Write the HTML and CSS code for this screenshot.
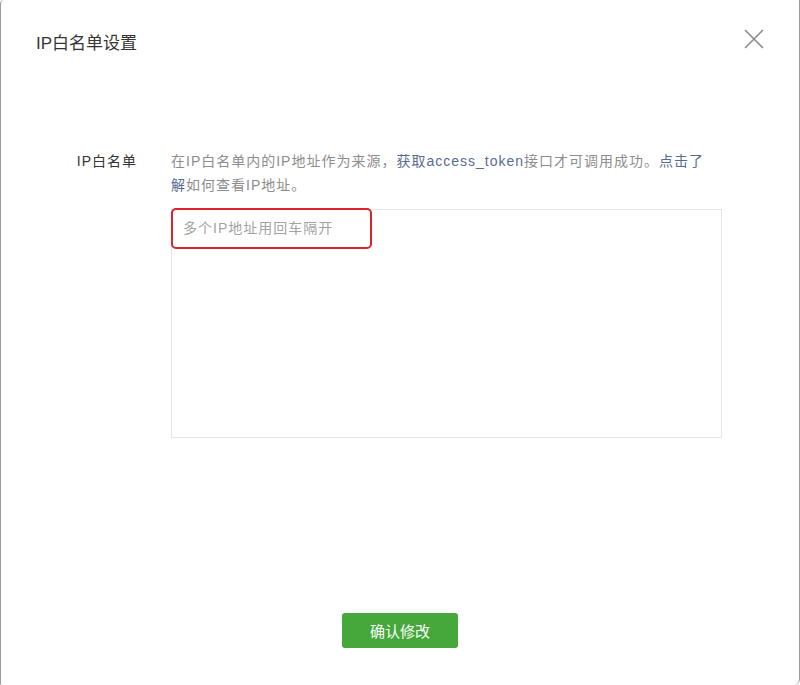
FILE: index.html
```html
<!DOCTYPE html>
<html lang="zh-CN">
<head>
<meta charset="utf-8">
<title>IP白名单设置</title>
<link rel="stylesheet" href="styles.css">
</head>
<body>
<div class="dialog">
  <div class="dialog-header">
    <h3 class="dialog-title">IP白名单设置</h3>
    <button class="close-btn" aria-label="关闭">
      <svg width="20" height="20" viewBox="0 0 20 20"><path d="M1 1L19 19M19 1L1 19" stroke="#8a8a8a" stroke-width="1.6" fill="none"/></svg>
    </button>
  </div>
  <div class="dialog-body">
    <div class="form-row">
      <label class="form-label">IP白名单</label>
      <div class="form-content">
        <p class="form-desc">在IP白名单内的IP地址作为来源，<a class="link">获取access_token</a>接口才可调用成功。<a class="link">点击了解</a>如何查看IP地址。</p>
        <div class="textarea-wrap">
          <textarea class="ip-input" placeholder="多个IP地址用回车隔开"></textarea>
          <div class="highlight"></div>
        </div>
      </div>
    </div>
  </div>
  <div class="dialog-footer">
    <button class="btn-primary">确认修改</button>
  </div>
</div>
</body>
</html>
```
FILE: styles.css
```css
* { box-sizing: border-box; }
html, body { margin: 0; padding: 0; background: #fff; }
body {
  font-family: "Liberation Sans", "Noto Sans CJK SC", sans-serif;
  color: #353535;
}
.dialog {
  width: 800px;
  height: 685px;
  border-left: 1.5px solid #9a9a9a;
  border-right: 1.5px solid #9a9a9a;
  border-top-left-radius: 4px;
  border-bottom-right-radius: 6px;
  border-bottom-left-radius: 2px;
  background: #fff;
  overflow: hidden;
}
.dialog-header {
  height: 82px;
  padding: 0 35px 0 35px;
  display: flex;
  align-items: center;
  justify-content: space-between;
}
.dialog-title {
  margin: 0;
  font-size: 17px;
  font-weight: normal;
  color: #353535;
}
.close-btn {
  border: 0;
  background: none;
  padding: 0;
  width: 20px;
  height: 20px;
  margin-top: -4px;
  cursor: pointer;
  display: flex;
}
.dialog-body {
  padding-top: 67px;
}
.form-row {
  display: flex;
  gap: 34px;
}
.form-label {
  width: 100px;
  margin-left: 36px;
  text-align: right;
  font-size: 14px;
  letter-spacing: 1px;
  line-height: 24px;
  color: #353535;
}
.form-content {
  width: 551px;
}
.form-desc {
  margin: 0;
  font-size: 14px;
  letter-spacing: 1px;
  line-height: 24px;
  color: #8d8d8d;
  width: 541px;
}
.link {
  color: #576b95;
  text-decoration: none;
}
.textarea-wrap {
  position: relative;
  margin-top: 12px;
}
.ip-input {
  display: block;
  width: 551px;
  height: 229px;
  border: 1px solid #e4e4e4;
  padding: 8px 11px;
  resize: none;
  font-family: "Liberation Sans", "Noto Sans CJK SC", sans-serif;
  font-size: 14px;
  letter-spacing: 1px;
  line-height: 20px;
  color: #353535;
  outline: none;
}
.ip-input::placeholder { color: #a3a3a3; }
.highlight {
  position: absolute;
  left: 0;
  top: -1px;
  width: 201px;
  height: 41px;
  border: 2px solid #d9252b;
  border-radius: 5px;
  pointer-events: none;
}
.dialog-footer {
  margin-top: 175px;
  display: flex;
  justify-content: center;
}
.btn-primary {
  width: 116px;
  height: 35px;
  border: 0;
  border-radius: 3px;
  background: #44a83b;
  color: #fff;
  font-family: "Liberation Sans", "Noto Sans CJK SC", sans-serif;
  font-size: 15px;
  cursor: pointer;
}
```
